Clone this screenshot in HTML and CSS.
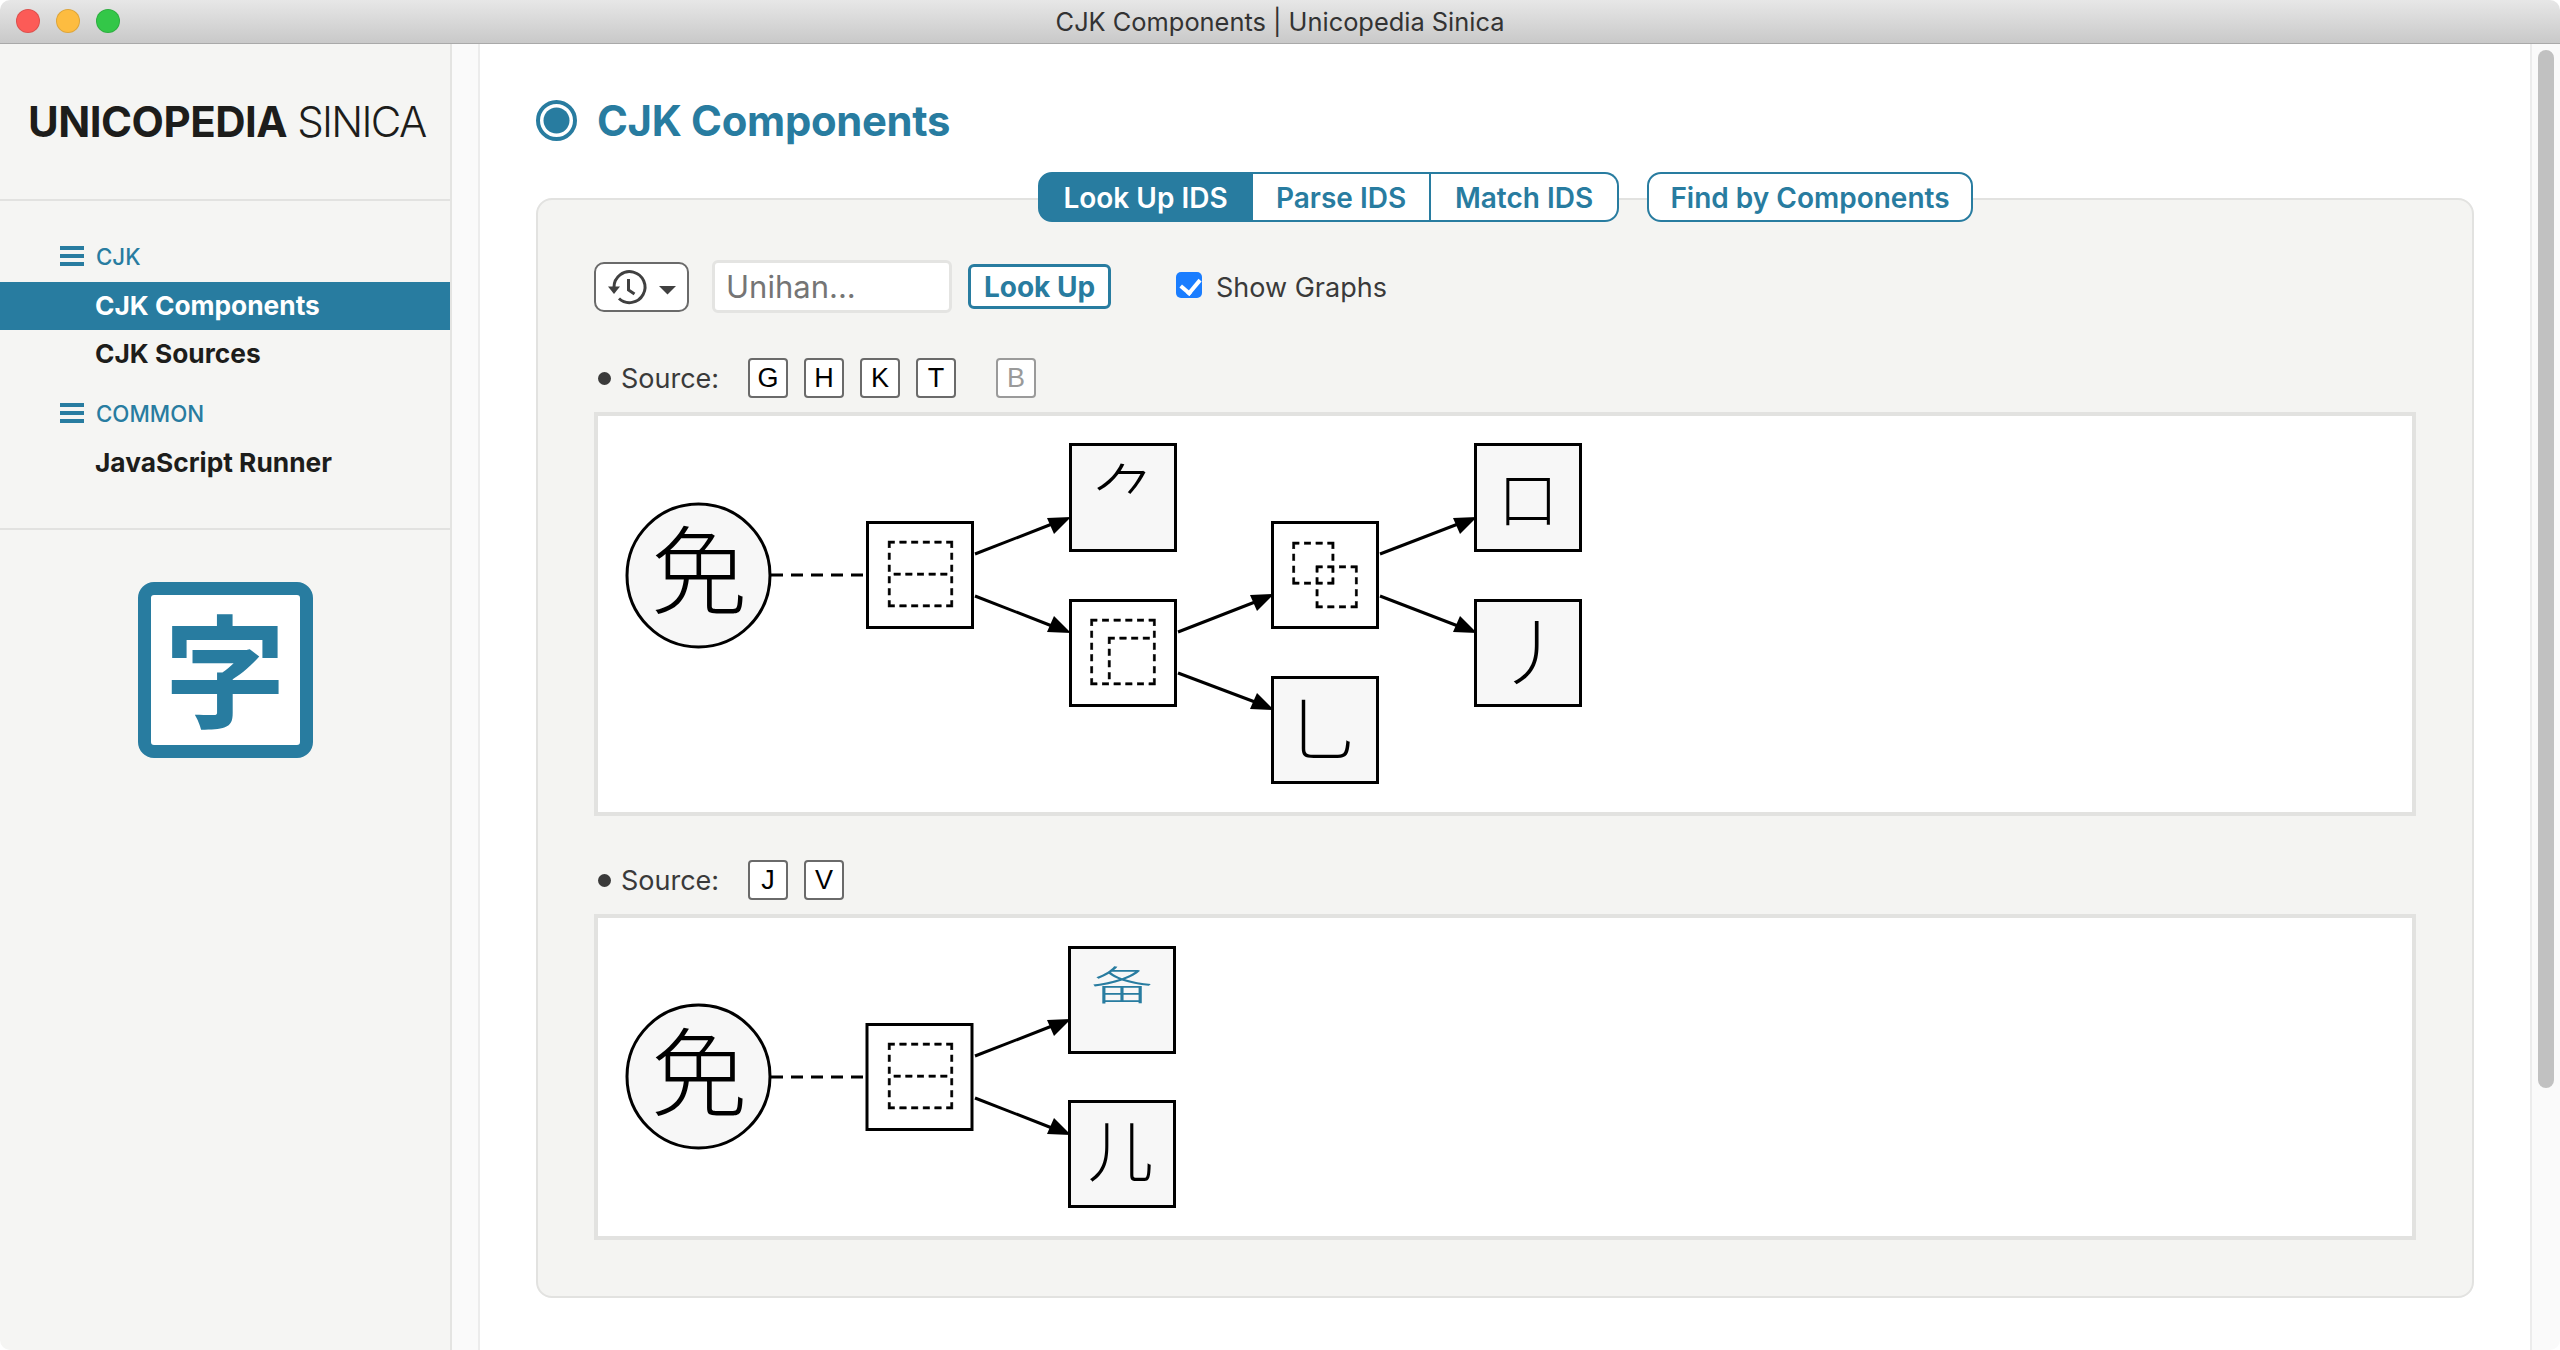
FILE: index.html
```html
<!DOCTYPE html>
<html lang="en">
<head>
<meta charset="utf-8">
<title>CJK Components | Unicopedia Sinica</title>
<link rel="stylesheet" href="styles.css">
</head>
<body>
<div class="window">
  <header class="titlebar">
    <div class="lights">
      <span class="light red"></span><span class="light yellow"></span><span class="light green"></span>
    </div>
    <div class="window-title">CJK Components | Unicopedia Sinica</div>
  </header>
  <div class="content">
    <aside class="sidebar">
      <div class="brand"><b>UNICOPEDIA</b> <span>SINICA</span></div>
      <nav class="nav">
        <div class="nav-head">
          <svg class="burger" viewBox="0 0 24 20"><rect width="24" height="4"/><rect y="8" width="24" height="4"/><rect y="16" width="24" height="4"/></svg>
          <span>CJK</span>
        </div>
        <a class="nav-item selected">CJK Components</a>
        <a class="nav-item">CJK Sources</a>
        <div class="nav-head second">
          <svg class="burger" viewBox="0 0 24 20"><rect width="24" height="4"/><rect y="8" width="24" height="4"/><rect y="16" width="24" height="4"/></svg>
          <span>COMMON</span>
        </div>
        <a class="nav-item">JavaScript Runner</a>
      </nav>
      <div class="logo-wrap"><div class="logo"><span lang="ja">字</span></div></div>
    </aside>
    <div class="side-track"></div>
    <main class="main">
      <h1 class="heading">
        <svg class="heading-icon" viewBox="0 0 41 41"><circle cx="20.5" cy="20.5" r="18.5"/><circle class="dot" cx="20.5" cy="20.5" r="13"/></svg>
        <span>CJK Components</span>
      </h1>
      <section class="panel">
        <div class="tabs">
          <div class="tab-group">
            <button class="tab active">Look Up IDS</button>
            <button class="tab">Parse IDS</button>
            <button class="tab">Match IDS</button>
          </div>
          <button class="tab solo">Find by Components</button>
        </div>
        <div class="lookup">
          <button class="history">
            <svg viewBox="606 268 72 38" width="72" height="38">
              <path class="hist-line" d="M614 287a15.5 15.5 0 1 1 5 11.5"/>
              <path class="hist-line" d="M628.5 279v11l6 4"/>
              <path class="hist-fill" d="M608 286.500h12l-6 7.500z"/>
              <path class="hist-fill" d="M659 286h17l-8.500 8.500z"/>
            </svg>
          </button>
          <input class="unihan" type="text" placeholder="Unihan...">
          <button class="lookup-btn">Look Up</button>
          <label class="show"><input type="checkbox" checked><span>Show Graphs</span></label>
        </div>
        <div class="source-row">
          <span class="bullet"></span><span class="source-label">Source:</span>
          <span class="keys">
            <span class="key">G</span><span class="key">H</span><span class="key">K</span><span class="key">T</span>
            <span class="key off">B</span>
          </span>
        </div>
        <div class="graph tall">
          <svg viewBox="598 416 1814 396" width="1814" height="396">
            <circle class="node" cx="698.500" cy="575.500" r="71.500"/>
            <text class="ch" x="699" y="606" lang="ja">免</text>
            <path class="dash" d="M771 575H866"/>
            <rect class="box plain" x="867.500" y="522.500" width="105" height="105"/>
            <text class="ids" x="920.500" y="601" lang="ja">⿱</text>
            <path class="edge" d="M975 554L1052 524"/><path class="head" d="M1071 517L1047 518L1054 534z"/>
            <path class="edge" d="M975 596L1052 626"/><path class="head" d="M1071 633L1054 616L1047 632z"/>
            <rect class="box" x="1070.500" y="444.500" width="105" height="106"/>
            <text class="ch top" x="1125" y="521" lang="ja">⺈</text>
            <rect class="box plain" x="1070.500" y="600.500" width="105" height="105"/>
            <text class="ids" x="1123" y="679" lang="ja">⿸</text>
            <path class="edge" d="M1178 632L1255 602"/><path class="head" d="M1274 594L1250 595L1257 611z"/>
            <path class="edge" d="M1178 673L1255 702"/><path class="head" d="M1274 710L1257 693L1250 709z"/>
            <rect class="box plain" x="1272.500" y="522.500" width="105" height="105"/>
            <text class="ids" x="1325" y="601.500" lang="ja">⿻</text>
            <rect class="box" x="1272.500" y="677.500" width="105" height="105"/>
            <text class="ch nyo" x="1323" y="756" lang="ja">乚</text>
            <path class="edge" d="M1380 554L1458 524"/><path class="head" d="M1477 517L1453 518L1460 534z"/>
            <path class="edge" d="M1380 596L1458 626"/><path class="head" d="M1477 633L1460 616L1453 632z"/>
            <rect class="box" x="1475.500" y="444.500" width="105" height="106"/>
            <text class="ch kou" x="1528" y="522" lang="ja">口</text>
            <rect class="box" x="1475.500" y="600.500" width="105" height="105"/>
            <text class="ch hetsu" x="1533" y="679" lang="ja">丿</text>
          </svg>
        </div>
        <div class="source-row next">
          <span class="bullet"></span><span class="source-label">Source:</span>
          <span class="keys"><span class="key">J</span><span class="key">V</span></span>
        </div>
        <div class="graph short">
          <svg viewBox="598 918 1814 318" width="1814" height="318">
            <circle class="node" cx="698.500" cy="1076.500" r="71.500"/>
            <text class="ch" x="699" y="1108" lang="ja">免</text>
            <path class="dash" d="M771 1077H866"/>
            <rect class="box plain" x="867" y="1024.500" width="105" height="105"/>
            <text class="ids" x="920.500" y="1103" lang="ja">⿱</text>
            <path class="edge" d="M975 1056L1052 1026"/><path class="head" d="M1071 1019L1047 1020L1054 1036z"/>
            <path class="edge" d="M975 1098L1052 1128"/><path class="head" d="M1071 1135L1054 1118L1047 1134z"/>
            <rect class="box" x="1069.500" y="947.500" width="105" height="105"/>
            <text class="ch comp" transform="translate(1122 1000) scale(1 0.65)" lang="ja">备</text>
            <rect class="box" x="1069.500" y="1101.500" width="105" height="105"/>
            <text class="ch er" x="1120.500" y="1176" lang="ja">儿</text>
          </svg>
        </div>
      </section>
    </main>
    <div class="scrollbar"><div class="thumb"></div></div>
  </div>
</div>
</body>
</html>
```
FILE: styles.css
```css
* { box-sizing: border-box; }
html, body { margin: 0; height: 100%; background: #fff; }
body { font-family: Inter, "Liberation Sans", "Noto Sans CJK JP", sans-serif; color: #1d1d1b; overflow: hidden; }

.window { height: 1350px; display: flex; flex-direction: column; border-radius: 10px; overflow: hidden; }

.titlebar {
  height: 44px; flex: none; display: flex; align-items: center; justify-content: center; position: relative;
  background: linear-gradient(#e7e7e7, #c9c9c9); border-bottom: 1px solid #a9a9a9;
}
.lights { position: absolute; left: 16px; top: 9px; display: flex; gap: 16px; }
.light { width: 24px; height: 24px; border-radius: 50%; border: 1px solid rgba(0,0,0,.12); }
.red { background: #fc5b57; }
.yellow { background: #fdbc40; }
.green { background: #33c748; }
.window-title { font-size: 25.400px; color: #333; font-family: Inter, sans-serif; }

.content { flex: 1; display: flex; min-height: 0; }

.sidebar { width: 452px; flex: none; background: #f5f5f3; border-right: 2px solid #e4e4e2; }
.brand { height: 155px; display: flex; align-items: center; padding-left: 28px; gap: 10px; font-size: 42px; letter-spacing: -0.500px; color: #1d1d1b; border-bottom: 2px solid #e2e2e0; box-sizing: content-box; width: 422px; }
.brand b { font-weight: 700; }
.brand span { font-weight: 300; letter-spacing: -1.700px; }

.nav { padding: 35px 0 41px; border-bottom: 2px solid #e2e2e0; width: 450px; }
.nav-head { height: 40px; display: flex; align-items: center; gap: 12px; padding-left: 60px; margin-bottom: 6px; color: #287ca0; font-size: 22.300px; font-weight: 500; }
.nav-head.second { margin-top: 15px; }
.burger { width: 24px; height: 20px; fill: #287ca0; flex: none; }
.nav-item { display: flex; align-items: center; height: 48px; padding: 0 0 2px 95px; font-size: 26.300px; font-weight: 700; color: #1d1d1b; }
.nav-item.selected { background: #287ca0; color: #fff; }

.logo-wrap { display: flex; justify-content: center; padding: 52px 0 0; width: 450px; }
.logo { width: 175px; height: 176px; padding-bottom: 10px; border: 13px solid #287ca0; border-radius: 16px; background: #fff; display: flex; align-items: center; justify-content: center; }
.logo span { font-family: "Noto Sans CJK JP", sans-serif; font-size: 122px; line-height: 1; color: #287ca0; font-weight: 700; }

.side-track { width: 28px; flex: none; background: #fafafa; border-right: 2px solid #ececec; }

.main { flex: 1; min-width: 0; padding: 56px 56px 0 56px; background: #fff; }
.heading { margin: 0 0 57px; height: 41px; display: flex; align-items: center; gap: 20px; color: #287ca0; font-size: 41.800px; font-weight: 700; letter-spacing: -0.300px; }
.heading-icon { width: 41px; height: 41px; flex: none; fill: none; stroke: #287ca0; stroke-width: 4; }
.heading-icon .dot { fill: #287ca0; stroke: none; }

.panel { height: 1100px; padding: 0 56px 56px 56px; background: #f4f4f2; border: 2px solid #e2e2e0; border-radius: 16px; }

.tabs { display: flex; justify-content: center; gap: 28px; margin-top: -28px; padding-left: 1px; height: 50px; }
.tab-group { display: flex; }
button { font-family: inherit; }
.tab { height: 50px; background: #fff; border: 2px solid #287ca0; border-left-width: 0; color: #287ca0; font-size: 28px; font-weight: 600; padding: 2px 0 0; margin: 0; }
.tab.active { background: #287ca0; color: #fff; border-left-width: 2px; border-radius: 14px 0 0 14px; width: 215px; }
.tab:nth-child(2) { width: 178px; }
.tab:nth-child(3) { width: 188px; border-right-width: 2px; border-left-width: 0; border-radius: 0 14px 14px 0; }
.tab.solo { border-left-width: 2px; border-radius: 14px; width: 326px; }

.lookup { display: flex; align-items: center; margin-top: 38px; height: 53px; }
.history { width: 95px; height: 50px; padding: 0; background: #fff; border: 2px solid #6a6a6a; border-radius: 10px; display: flex; align-items: center; justify-content: center; }
.hist-line { fill: none; stroke: #404040; stroke-width: 3; }
.hist-fill { fill: #404040; }
.unihan { width: 240px; height: 53px; margin-left: 23px; padding: 0 11px; border: 3px solid #e4e4e2; border-radius: 6px; background: #fff; font-family: inherit; font-size: 31px; outline: 0; }
.unihan::placeholder { color: #757575; opacity: 1; }
.lookup-btn { width: 143px; height: 45px; margin-left: 16px; padding: 1px 0 0; background: #fff; border: 3px solid #287ca0; border-radius: 6px; color: #287ca0; font-size: 28px; font-weight: 700; }
.show { display: flex; align-items: center; margin-left: 65px; font-size: 27px; color: #3a3a3a; }
.show span { padding-top: 2px; }
.show input { appearance: none; width: 26px; height: 26px; margin: -3px 14px 0 0; border-radius: 5px; background: #1a7dff; position: relative; }
.show input::after { content: ""; position: absolute; left: 8px; top: 3px; width: 9px; height: 15px; border: solid #fff; border-width: 0 4px 4px 0; transform: rotate(40deg); }

.source-row { display: flex; align-items: center; height: 40px; margin-top: 45px; color: #3a3a3a; font-size: 27px; }
.source-row.next { margin-top: 44px; }
.bullet { width: 13px; height: 13px; border-radius: 50%; background: #3a3a3a; margin-left: 4px; flex: none; }
.source-label { margin-left: 10px; width: 127px; }
.keys { display: flex; gap: 16px; }
.key { width: 40px; height: 40px; display: flex; align-items: center; justify-content: center; background: #fff; border: 2px solid #6a6a6a; border-radius: 4px; color: #000; font-size: 27px; font-family: "Liberation Sans", sans-serif; }
.key.off { margin-left: 24px; color: #9a9a9a; border-color: #9a9a9a; }

.graph { width: 1822px; border: 4px solid #e2e2e0; background: #fff; margin-top: 14px; }
.graph svg { display: block; }
.graph.tall { height: 404px; }
.graph.short { height: 326px; }

.node, .box { fill: #f7f7f7; stroke: #000; stroke-width: 3; }
.box.plain { fill: #fff; }
.dash { fill: none; stroke: #000; stroke-width: 3; stroke-dasharray: 12 8; }
.edge { fill: none; stroke: #000; stroke-width: 3; }
.head { fill: #000; stroke: none; }
.ch, .ids { font-family: "Noto Sans CJK JP", sans-serif; text-anchor: middle; fill: #000; }
.ch { font-size: 96px; font-weight: 300; }
.ids { font-size: 72px; stroke: #000; stroke-width: 0.500px; }
.ch.top { font-size: 68px; }
.ch.kou { font-size: 60px; }
.ch.nyo { font-size: 70px; }
.ch.hetsu { font-size: 72px; }
.ch.er { font-size: 66px; }
.ch.comp { font-size: 62px; fill: #287ca0; }

.scrollbar { width: 30px; flex: none; background: #fafafa; border-left: 2px solid #ececec; padding: 6px 6px 0; }
.thumb { width: 16px; height: 1038px; border-radius: 8px; background: #c1c1c1; }
```
